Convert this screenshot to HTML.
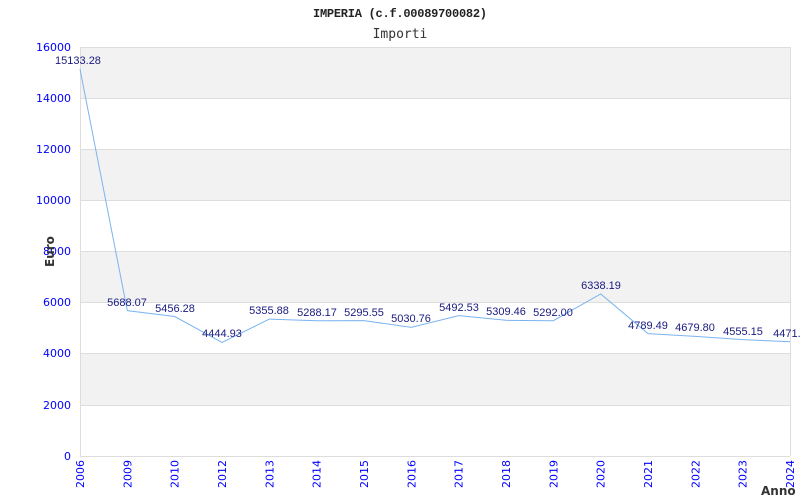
<!DOCTYPE html>
<html><head><meta charset="utf-8"><style>html,body{margin:0;padding:0;background:#fff;}svg{display:block}</style></head>
<body>
<svg width="800" height="500" xmlns="http://www.w3.org/2000/svg">
<rect x="0" y="0" width="800" height="500" fill="#fff"/>
<g fill="#f2f2f2">
<rect x="80" y="47" width="710" height="51"/>
<rect x="80" y="149" width="710" height="51"/>
<rect x="80" y="251" width="710" height="51"/>
<rect x="80" y="353" width="710" height="52"/>
</g>
<g stroke="#dddddd" stroke-width="1">
<line x1="80" y1="47.5" x2="790" y2="47.5"/>
<line x1="80" y1="98.5" x2="790" y2="98.5"/>
<line x1="80" y1="149.5" x2="790" y2="149.5"/>
<line x1="80" y1="200.5" x2="790" y2="200.5"/>
<line x1="80" y1="251.5" x2="790" y2="251.5"/>
<line x1="80" y1="302.5" x2="790" y2="302.5"/>
<line x1="80" y1="353.5" x2="790" y2="353.5"/>
<line x1="80" y1="405.5" x2="790" y2="405.5"/>
<line x1="80" y1="456.5" x2="790" y2="456.5"/>
<line x1="80.5" y1="47" x2="80.5" y2="456"/>
<line x1="790.5" y1="47" x2="790.5" y2="456"/>
</g>
<polyline fill="none" stroke="#7ab4f0" stroke-width="1" points="80,69.2 127.3,310.6 174.7,316.5 222,342.4 269.3,319.1 316.7,320.8 364,320.6 411.3,327.4 458.7,315.6 506,320.3 553.3,320.7 600.7,294 648,333.6 695.3,336.4 742.7,339.6 790,341.7"/>
<g font-family="Liberation Sans, sans-serif" font-size="11" fill="#1a1a80" text-anchor="middle">
<text x="78" y="64">15133.28</text>
<text x="127" y="306">5688.07</text>
<text x="175" y="312">5456.28</text>
<text x="222" y="337">4444.93</text>
<text x="269" y="314">5355.88</text>
<text x="317" y="316">5288.17</text>
<text x="364" y="316">5295.55</text>
<text x="411" y="322">5030.76</text>
<text x="459" y="311">5492.53</text>
<text x="506" y="315">5309.46</text>
<text x="553" y="316">5292.00</text>
<text x="601" y="289">6338.19</text>
<text x="648" y="329">4789.49</text>
<text x="695" y="331">4679.80</text>
<text x="743" y="335">4555.15</text>
<text x="790" y="337">4471.7</text>
</g>
<g font-family="DejaVu Sans, sans-serif" font-size="11" fill="#0000ff" text-anchor="end">
<text x="71" y="51">16000</text>
<text x="71" y="102">14000</text>
<text x="71" y="153">12000</text>
<text x="71" y="204">10000</text>
<text x="71" y="255">8000</text>
<text x="71" y="306">6000</text>
<text x="71" y="357">4000</text>
<text x="71" y="409">2000</text>
<text x="71" y="460">0</text>
</g>
<g font-family="DejaVu Sans, sans-serif" font-size="11" fill="#0000ff" text-anchor="end">
<text transform="translate(84,460) rotate(-90)">2006</text>
<text transform="translate(131.3,460) rotate(-90)">2009</text>
<text transform="translate(178.7,460) rotate(-90)">2010</text>
<text transform="translate(226,460) rotate(-90)">2012</text>
<text transform="translate(273.3,460) rotate(-90)">2013</text>
<text transform="translate(320.7,460) rotate(-90)">2014</text>
<text transform="translate(368,460) rotate(-90)">2015</text>
<text transform="translate(415.3,460) rotate(-90)">2016</text>
<text transform="translate(462.7,460) rotate(-90)">2017</text>
<text transform="translate(510,460) rotate(-90)">2018</text>
<text transform="translate(557.3,460) rotate(-90)">2019</text>
<text transform="translate(604.7,460) rotate(-90)">2020</text>
<text transform="translate(652,460) rotate(-90)">2021</text>
<text transform="translate(699.3,460) rotate(-90)">2022</text>
<text transform="translate(746.7,460) rotate(-90)">2023</text>
<text transform="translate(794,460) rotate(-90)">2024</text>
</g>
<text x="400" y="17" font-family="Liberation Mono, monospace" font-size="12" font-weight="bold" fill="#222" text-anchor="middle" textLength="174">IMPERIA (c.f.00089700082)</text>
<text x="400" y="38" font-family="DejaVu Sans Mono, monospace" font-size="13" fill="#333" text-anchor="middle">Importi</text>
<text transform="translate(54,267) rotate(-90)" font-family="DejaVu Sans, sans-serif" font-size="12" font-weight="bold" fill="#333">Euro</text>
<text x="761" y="495" font-family="DejaVu Sans, sans-serif" font-size="12" font-weight="bold" fill="#333">Anno</text>
</svg>
</body></html>
